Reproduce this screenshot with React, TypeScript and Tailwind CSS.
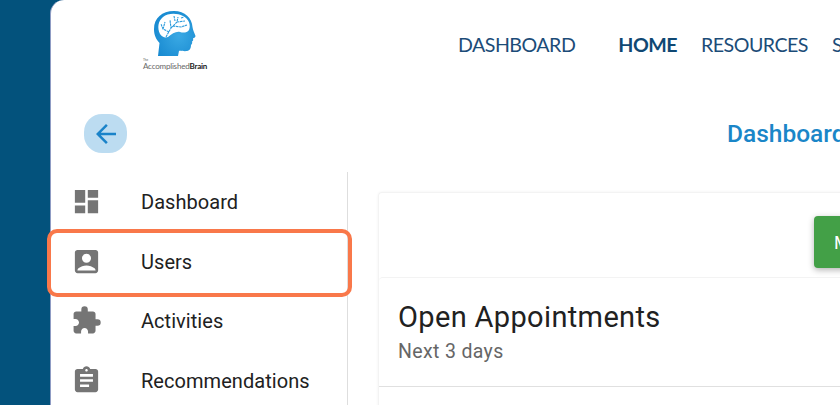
import { MdAccountBox, MdArrowBack, MdAssignment, MdDashboard, MdExtension } from 'react-icons/md';

const sideItems = [
  { label: 'Dashboard', Icon: MdDashboard },
  { label: 'Users', Icon: MdAccountBox },
  { label: 'Activities', Icon: MdExtension },
  { label: 'Recommendations', Icon: MdAssignment },
];

function Logo() {
  return (
    <div className="flex w-[68px] flex-col">
      <svg viewBox="0 0 42 47" className="ml-[11px] h-[47px] w-[42px]">
        <defs>
          <radialGradient id="head" cx="0.6" cy="0.55" r="0.7">
            <stop offset="0" stopColor="#3aa9e4" />
            <stop offset="1" stopColor="#1587cf" />
          </radialGradient>
        </defs>
        <path
          d="M4 46 L5.5 33 C2 29 0 25 0 19 C0 8 8 1 20 1 C31 1 38 8 38.5 17 C38.8 20 41 24 41.5 26 C41.5 27.5 39.5 28 39 28.5 C39.5 30 39 31 38 31.5 C38.5 33 38 34 37 35 C37 38 36 40.5 33 41 C30 41.5 26 40.5 25 41 L24 46 Z"
          fill="url(#head)"
        />
        <path
          d="M6 24 C3 18 4 11 9 7 C14 3 23 3 29 6 C35 9 37 15 35 20 C33 23 29 23 26 22 C22 21 18 24 14 27 C11 28 8 27 6 24 Z"
          fill="#fff"
        />
        <path
          d="M12 27 L17 18 L16 10 M17 18 L23 12 L24 7 M23 12 L31 11 M15 22 L9 19 L7 14 M9 19 L11 12 M19 16 L27 17 L33 15 M20 6 L21 11 M27 8 L30 7"
          fill="none"
          stroke="#2a9bdc"
          strokeWidth="1.1"
          strokeDasharray="2.5 0.6"
        />
      </svg>
      <span className="mt-[1px] text-[3px] leading-[4px] text-[#555] font-['Liberation_Sans',sans-serif]">The</span>
      <span className="whitespace-nowrap text-[8px] leading-[9px] tracking-[-0.2px] text-[#666] font-['Lato',sans-serif]">
        Accomplished<b className="text-[#222]">Brain</b>
      </span>
    </div>
  );
}

export default function App() {
  return (
    <div className="relative flex h-[405px] w-[840px] overflow-hidden bg-[#03527c] font-['Roboto',sans-serif]">
      <div className="w-[50px] shrink-0" />
      <div className="flex w-[790px] shrink-0 flex-col overflow-hidden rounded-tl-[14px] border-l border-[#8f9cc4] bg-white">
        {/* header */}
        <div className="flex h-[114px] shrink-0 items-start">
          <div className="ml-[92px] mt-[10px] shrink-0">
            <Logo />
          </div>
          <nav className="ml-[247px] mt-[32px] flex whitespace-nowrap font-['Lato',sans-serif] text-[19.6px] leading-[26px] tracking-[-0.5px] text-[#1c4c78]">
            <a className="mr-[43px]">DASHBOARD</a>
            <a className="mr-[24px] font-bold text-[#0f4873]">HOME</a>
            <a className="mr-[24px]">RESOURCES</a>
            <a>SETTINGS</a>
          </nav>
        </div>

        {/* back + page title */}
        <div className="flex h-[58px] shrink-0 items-start">
          <button className="ml-[33px] flex h-[39px] w-[43px] shrink-0 items-center justify-center rounded-[18px] bg-[#bcdcf1] text-[#1a83c9]">
            <MdArrowBack size={30} />
          </button>
          <h1 className="ml-[600px] mt-[5px] whitespace-nowrap text-[24.5px] font-medium leading-[30px] text-[#1a86c8]">
            Dashboard
          </h1>
        </div>

        <div className="flex min-h-0 flex-1">
          {/* sidebar */}
          <aside className="w-[297px] shrink-0 border-r border-[#dedede]">
            {sideItems.map(({ label, Icon }) => (
              <div key={label} className="flex h-[59.5px] items-center pl-[20px] text-[#757575]">
                <Icon size={31} className="shrink-0" />
                <span className="ml-[39px] pt-[1px] text-[20px] tracking-[0.05px] text-[#212121]">{label}</span>
              </div>
            ))}
          </aside>

          {/* content */}
          <main className="min-w-0 flex-1 pl-[30px] pt-[20px]">
            <div className="w-[700px] rounded-[4px] border-l border-t border-[#f3f3f3] shadow-[0_0_3px_rgba(0,0,0,0.06)]">
              <div className="h-[84px] pl-[435px] pt-[23px]">
                <button className="flex h-[52px] w-[120px] items-center rounded-[4px] bg-[#43a047] pl-[20px] text-[18px] text-white shadow-[0_2px_6px_rgba(0,0,0,0.3)]">
                  MANAGE
                </button>
              </div>
              <div className="rounded-t-[4px] border-t border-[#f3f3f3]">
                <div className="h-[109px] border-b border-[#e0e0e0] pl-[19px] pt-[21px]">
                  <h2 className="text-[29px] leading-[36px] tracking-[0.35px] text-[#212121]">Open Appointments</h2>
                  <p className="mt-[5px] text-[19.5px] leading-[24px] tracking-[0.35px] text-[#666]">Next 3 days</p>
                </div>
                <div className="h-[60px]" />
              </div>
            </div>
          </main>
        </div>
      </div>

      {/* annotation around the Users row */}
      <div className="absolute left-[47px] top-[229px] h-[68px] w-[305px] rounded-[10px] border-4 border-[#f9784a]" />
    </div>
  );
}
